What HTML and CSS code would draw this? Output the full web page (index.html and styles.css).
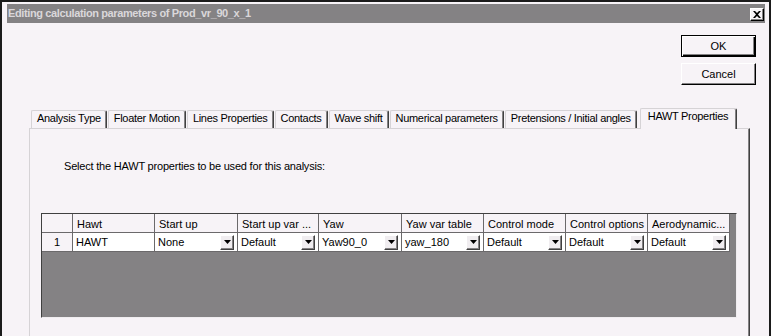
FILE: index.html
```html
<!DOCTYPE html>
<html>
<head>
<meta charset="utf-8">
<title>Editing calculation parameters</title>
<link rel="stylesheet" href="styles.css">
</head>
<body>
<div class="window">
  <div class="titlebar">
    <span class="title">Editing calculation parameters of Prod_vr_90_x_1</span>
    <span class="close"><svg width="8" height="7" viewBox="0 0 8 7"><path d="M0 0h2l2 2 2-2h2L5 3.5 8 7H6L4 5 2 7H0l3-3.5z" fill="#000"/></svg></span>
  </div>
  <div class="client">
    <div class="actions">
      <button class="btn btn-default">OK</button>
      <button class="btn">Cancel</button>
    </div>
    <div class="tabs">
      <div class="tabstrip">
        <div class="tab">Analysis Type</div>
        <div class="tab">Floater Motion</div>
        <div class="tab">Lines Properties</div>
        <div class="tab">Contacts</div>
        <div class="tab">Wave shift</div>
        <div class="tab">Numerical parameters</div>
        <div class="tab">Pretensions / Initial angles</div>
        <div class="tab is-active">HAWT Properties</div>
      </div>
      <div class="panel">
        <p class="prompt">Select the HAWT properties to be used for this analysis:</p>
        <div class="grid">
          <div class="grid-row head">
            <div class="cell"></div>
            <div class="cell">Hawt</div>
            <div class="cell">Start up</div>
            <div class="cell">Start up var ...</div>
            <div class="cell">Yaw</div>
            <div class="cell">Yaw var table</div>
            <div class="cell">Control mode</div>
            <div class="cell">Control options</div>
            <div class="cell">Aerodynamic...</div>
          </div>
          <div class="grid-row data">
            <div class="cell rownum">1</div>
            <div class="cell">HAWT</div>
            <div class="cell"><span>None</span><span class="drop"><svg width="7" height="4" viewBox="0 0 7 4"><path d="M0 0h7L3.5 4z" fill="#000"/></svg></span></div>
            <div class="cell"><span>Default</span><span class="drop"><svg width="7" height="4" viewBox="0 0 7 4"><path d="M0 0h7L3.5 4z" fill="#000"/></svg></span></div>
            <div class="cell"><span>Yaw90_0</span><span class="drop"><svg width="7" height="4" viewBox="0 0 7 4"><path d="M0 0h7L3.5 4z" fill="#000"/></svg></span></div>
            <div class="cell"><span>yaw_180</span><span class="drop"><svg width="7" height="4" viewBox="0 0 7 4"><path d="M0 0h7L3.5 4z" fill="#000"/></svg></span></div>
            <div class="cell"><span>Default</span><span class="drop"><svg width="7" height="4" viewBox="0 0 7 4"><path d="M0 0h7L3.5 4z" fill="#000"/></svg></span></div>
            <div class="cell"><span>Default</span><span class="drop"><svg width="7" height="4" viewBox="0 0 7 4"><path d="M0 0h7L3.5 4z" fill="#000"/></svg></span></div>
            <div class="cell"><span>Default</span><span class="drop"><svg width="7" height="4" viewBox="0 0 7 4"><path d="M0 0h7L3.5 4z" fill="#000"/></svg></span></div>
          </div>
        </div>
      </div>
    </div>
  </div>
</div>
</body>
</html>
```
FILE: styles.css
```css
* { box-sizing: border-box; }
html, body { margin: 0; height: 336px; overflow: hidden; }
body {
  background: #1b1b1b;
  font-family: "Liberation Sans", Arial, sans-serif;
  font-size: 11px;
  letter-spacing: -0.2px;
  color: #000;
}
.window {
  margin: 2px 2px 0 2px;
  height: 334px;
  background: #f7f3f7;
  padding: 2px 4px 0 5px;
  display: flex;
  flex-direction: column;
}
.titlebar {
  flex: none;
  height: 19px;
  background: #848284;
  display: flex;
  align-items: center;
  justify-content: space-between;
  padding: 0 1px 0 1px;
}
.title {
  color: #dad7da;
  font-weight: bold;
  letter-spacing: -0.38px;
  line-height: 13px;
  white-space: nowrap;
}
.close {
  width: 14px;
  height: 13px;
  margin-top: 1px;
  background: #f7f3f7;
  border: 1px solid;
  border-color: #fff #000 #000 #fff;
  box-shadow: inset -1px -1px #848284;
  display: flex;
  align-items: center;
  justify-content: center;
}
.close svg { display: block; }
.client {
  flex: 1;
  min-height: 0;
  display: flex;
  flex-direction: column;
}
.actions {
  display: flex;
  flex-direction: column;
  align-items: flex-end;
  gap: 6px;
  padding: 12px 9px 0 0;
}
.btn {
  width: 75px;
  height: 22px;
  padding: 0;
  font: inherit;
  letter-spacing: 0;
  color: #000;
  background: #f7f3f7;
  border: 1px solid;
  border-color: #fff #000 #000 #fff;
  box-shadow: inset -1px -1px #848284;
}
.btn-default {
  border-color: #000;
  box-shadow: inset 1px 1px #fff, inset -1px -1px #000, inset -2px -2px #848284;
}
.tabs {
  flex: 1;
  min-height: 0;
  margin: 22px 15px 0 22px;
  display: flex;
  flex-direction: column;
}
.tabstrip {
  flex: none;
  height: 21px;
  display: flex;
  align-items: flex-end;
  padding-left: 2px;
  position: relative;
  z-index: 1;
  letter-spacing: -0.3px;
}
.tab {
  height: 18px;
  padding: 1px 5px 0;
  line-height: 13px;
  white-space: nowrap;
  background: #f7f3f7;
  border: 1px solid #d6d3d6;
  border-bottom: none;
  border-right-color: #404040;
  box-shadow: inset -1px 0 #848284;
  border-radius: 2px 2px 0 0;
  margin-right: 1px;
}
.tab.is-active {
  height: 21px;
  margin: 0 0 -1px 2px;
  padding: 1px 8px 0 7px;
}
.panel {
  flex: 1;
  border-top: 1px solid #d6d3d6;
  border-left: 1px solid #d6d3d6;
  border-right: 1px solid #404040;
  box-shadow: inset -1px 0 #848284;
}
.prompt {
  margin: 31px 0 0 34px;
  line-height: 13px;
}
.grid {
  margin: 40px 12px 0 11px;
  height: 105px;
  background: #848284;
  border: 1px solid;
  border-color: #404040 #f0edf0 #f0edf0 #404040;
  letter-spacing: 0;
}
.grid-row {
  display: grid;
  grid-template-columns: 31px 82px 83px 81px 83px 82px 82px 82px 82px;
}
.cell {
  height: 19px;
  border-right: 1px solid #6b696b;
  border-bottom: 1px solid #6b696b;
  white-space: nowrap;
  overflow: hidden;
}
.head .cell {
  background: #f7f3f7;
  padding: 4px 0 0 4px;
  line-height: 13px;
}
.data .cell {
  background: #fff;
  display: flex;
  align-items: center;
  justify-content: space-between;
  padding-left: 3px;
  line-height: 13px;
}
.data .rownum {
  background: #f7f3f7;
  justify-content: center;
  padding-left: 0;
}
.drop {
  flex: none;
  width: 14px;
  height: 15px;
  margin-right: 3px;
  background: #f0edf0;
  border: 1px solid;
  border-color: #fff #404040 #404040 #fff;
  box-shadow: inset -1px -1px #848284;
  display: flex;
  align-items: center;
  justify-content: center;
}
.drop svg { display: block; }
```
